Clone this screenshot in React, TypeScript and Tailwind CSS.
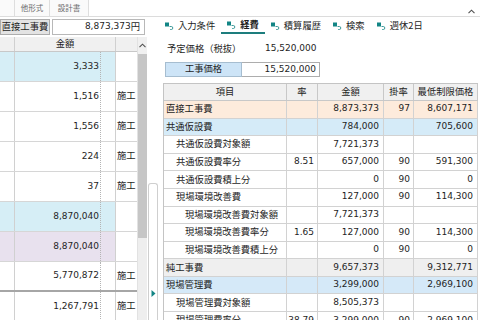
import React from "react";

const cjk = "font-['Noto_Sans_CJK_JP',sans-serif] text-[9.3px] text-[#1e1e1e]";
const num = "font-['DejaVu_Sans','Noto_Sans_CJK_JP',sans-serif] text-[9px] text-[#1e1e1e]";

function TabIcon() {
  return (
    <svg width="9" height="8" viewBox="0 0 9 8" className="shrink-0">
      <rect x="0" y="0.5" width="4" height="4" fill="#128585" />
      <path d="M4.5 4.5 H6.3 A1.5 1.5 0 0 1 6.3 7.5 H5.2" fill="none" stroke="#3d9a9a" strokeWidth="1" />
    </svg>
  );
}

function ChevronUp() {
  return (
    <svg width="7" height="5" viewBox="0 0 7 5">
      <polyline points="0.5,4.2 3.5,1.2 6.5,4.2" fill="none" stroke="#505050" strokeWidth="1.1" />
    </svg>
  );
}

type LeftRow = { v: string; bg?: string; s?: boolean; thick?: boolean };
const leftRows: LeftRow[] = [
  { v: "3,333", bg: "bg-[#d6eef6]" },
  { v: "1,516", s: true },
  { v: "1,556", s: true },
  { v: "224", s: true },
  { v: "37", s: true },
  { v: "8,870,040", bg: "bg-[#d6eef6]" },
  { v: "8,870,040", bg: "bg-[#e8e1ee]" },
  { v: "5,770,872", s: true, thick: true },
  { v: "1,267,791", s: true },
];

type RightRow = {
  label: string;
  level: number;
  rate?: string;
  amt?: string;
  kake?: string;
  min?: string;
  bg?: string;
};
const rightRows: RightRow[] = [
  { label: "直接工事費", level: 0, amt: "8,873,373", kake: "97", min: "8,607,171", bg: "bg-[#fdebdc]" },
  { label: "共通仮設費", level: 0, amt: "784,000", min: "705,600", bg: "bg-[#d5ebf8]" },
  { label: "共通仮設費対象額", level: 1, amt: "7,721,373" },
  { label: "共通仮設費率分", level: 1, rate: "8.51", amt: "657,000", kake: "90", min: "591,300" },
  { label: "共通仮設費積上分", level: 1, amt: "0", kake: "90", min: "0" },
  { label: "現場環境改善費", level: 1, amt: "127,000", kake: "90", min: "114,300" },
  { label: "現場環境改善費対象額", level: 2, amt: "7,721,373" },
  { label: "現場環境改善費率分", level: 2, rate: "1.65", amt: "127,000", kake: "90", min: "114,300" },
  { label: "現場環境改善費積上分", level: 2, amt: "0", kake: "90", min: "0" },
  { label: "純工事費", level: 0, amt: "9,657,373", min: "9,312,771", bg: "bg-[#efefef]" },
  { label: "現場管理費", level: 0, amt: "3,299,000", min: "2,969,100", bg: "bg-[#d5e9f8]" },
  { label: "現場管理費対象額", level: 1, amt: "8,505,373" },
  { label: "現場管理費率分", level: 1, rate: "38.79", amt: "3,299,000", kake: "90", min: "2,969,100" },
];

const tabs = ["入力条件", "経費", "積算履歴", "検索", "週休2日"];

export default function App() {
  return (
    <div className="w-[480px] h-[320px] overflow-hidden bg-white flex flex-col">
      {/* top bar */}
      <div className="h-[17px] border-b border-[#dcdcdc] flex shrink-0">
        <div className="flex h-full bg-[#fafafa]">
          <div className="w-[15px] border-r border-[#dedede]" />
          <div className="w-[35px] border-r border-[#dedede] flex items-center justify-center font-['Noto_Sans_CJK_JP',sans-serif] text-[7.5px] text-[#6a6a6a]">
            他形式
          </div>
          <div className="w-[39px] border-r border-[#dedede] flex items-center justify-center font-['Noto_Sans_CJK_JP',sans-serif] text-[7.5px] text-[#6a6a6a]">
            設計書
          </div>
        </div>
        <div className="flex-1 flex items-end justify-end pr-[5px] pb-[2px]">
          <ChevronUp />
        </div>
      </div>

      {/* body */}
      <div className="flex flex-1 min-h-0">
        {/* left panel */}
        <div className="w-[147px] flex flex-col shrink-0">
          <div className="mt-[2px] mb-[2px] h-[16px] flex gap-[2px]">
            <div className={`w-[50px] bg-[#e3e3e3] border border-[#adadad] flex items-center justify-center ${cjk}`}>
              直接工事費
            </div>
            <div className="w-[93px] border border-[#b8b8b8] flex items-center justify-end pr-[4px]">
              <span className={num}>8,873,373</span>
              <span className={cjk}>円</span>
            </div>
          </div>
          <div className="flex flex-1 min-h-0">
            <div className="w-[137px] flex flex-col">
              <div className="h-[17px] flex bg-[#f0f0f0] border-b border-[#c8c8c8]">
                <div className="w-[15px] border-r border-[#d0d0d0]" />
                <div className={`w-[101px] border-r border-[#d0d0d0] flex items-center justify-center ${cjk}`}>金額</div>
                <div className="flex-1" />
              </div>
              {leftRows.map((r, i) => (
                <div
                  key={i}
                  className={`flex h-[30px] shrink-0 ${r.thick ? "border-b-2 border-[#a6a6a6]" : "border-b border-[#d6d6d6]"}`}
                >
                  <div className={`w-[15px] border-r border-[#d0d0d0] ${r.bg ?? ""}`} />
                  <div className={`w-[101px] border-r border-[#d0d0d0] flex ${r.bg ?? ""}`}>
                    <div className="w-[86px] border-r border-dotted border-[#b4b4b4] flex items-center justify-end pr-[1px]">
                      <span className={num}>{r.v}</span>
                    </div>
                  </div>
                  <div className={`flex-1 flex items-center pl-[1px] ${cjk}`}>{r.s ? "施工" : ""}</div>
                </div>
              ))}
            </div>
            {/* scrollbar */}
            <div className="w-[10px] flex flex-col border-l border-[#e2e2e2] bg-[#f0f0f0]">
              <div className="h-[17px] flex items-center justify-center bg-[#f0f0f0]">
                <ChevronUp />
              </div>
              <div className="h-[184px] bg-[#c6c6c6]" />
              <div className="flex-1 bg-[#eeeeee]" />
            </div>
          </div>
        </div>

        {/* splitter */}
        <div className="w-[12px] flex flex-col shrink-0">
          <div className="mt-[166px] ml-[1px] w-[10px] flex-1 border border-b-0 border-[#cfcfcf] rounded-t-[3px] bg-white pt-[106px] pl-[2px]">
            <svg width="5" height="7" viewBox="0 0 5 7">
              <polygon points="0.5,0 4.5,3.5 0.5,7" fill="#138585" />
            </svg>
          </div>
        </div>

        {/* right panel */}
        <div className="flex-1 flex flex-col min-w-0">
          <div className="h-[17px] flex shrink-0">
            {tabs.map((t, i) => (
              <div
                key={t}
                className={`flex items-center gap-[4px] px-[6px] ${i === 1 ? "border-b-2 border-[#1d7d7d]" : ""}`}
              >
                <TabIcon />
                <span className={`${cjk} ${i === 1 ? "font-bold" : ""}`}>{t}</span>
              </div>
            ))}
          </div>
          <div className="mt-[8px] h-[14px] flex items-center pl-[8px]">
            <span className={`w-[98px] ${cjk}`}>予定価格（税抜）</span>
            <span className={`w-[51px] text-right ${num}`}>15,520,000</span>
          </div>
          <div className="mt-[6px] ml-[6px] h-[15px] flex shrink-0">
            <div className={`w-[77px] bg-[#cde4f7] border border-[#a6bdd0] flex items-center justify-center ${cjk}`}>
              工事価格
            </div>
            <div className="w-[78px] border border-l-0 border-[#adadad] flex items-center justify-end pr-[3px]">
              <span className={num}>15,520,000</span>
            </div>
          </div>
          <div className="mt-[6px] ml-[4px] w-[315px] border-l border-t border-[#c4c4c4] flex flex-col">
            <div className="grid grid-cols-[123px_31px_66px_30px_64px] h-[17px] shrink-0 bg-[#f0f0f0]">
              {["項目", "率", "金額", "掛率", "最低制限価格"].map((h) => (
                <div
                  key={h}
                  className={`border-r border-b border-[#c8c8c8] flex items-center justify-center whitespace-nowrap ${cjk}`}
                >
                  {h}
                </div>
              ))}
            </div>
            {rightRows.map((r, i) => (
              <div
                key={i}
                className={`grid grid-cols-[123px_31px_66px_30px_64px] h-[17.6px] shrink-0 ${r.bg ?? ""}`}
              >
                <div
                  className={`border-r border-b border-[#d2d2d2] flex items-center whitespace-nowrap ${cjk} ${
                    r.level === 0 ? "pl-[2px]" : r.level === 1 ? "pl-[12px]" : "pl-[21px]"
                  }`}
                >
                  {r.label}
                </div>
                <div className="border-r border-b border-[#d2d2d2] flex items-center justify-end pr-[3px]">
                  <span className={num}>{r.rate ?? ""}</span>
                </div>
                <div className="border-r border-b border-[#d2d2d2] flex items-center justify-end pr-[4px]">
                  <span className={num}>{r.amt ?? ""}</span>
                </div>
                <div className="border-r border-b border-[#d2d2d2] flex items-center justify-end pr-[3px]">
                  <span className={num}>{r.kake ?? ""}</span>
                </div>
                <div className="border-r border-b border-[#d2d2d2] flex items-center justify-end pr-[4px]">
                  <span className={num}>{r.min ?? ""}</span>
                </div>
              </div>
            ))}
          </div>
        </div>
      </div>
    </div>
  );
}
